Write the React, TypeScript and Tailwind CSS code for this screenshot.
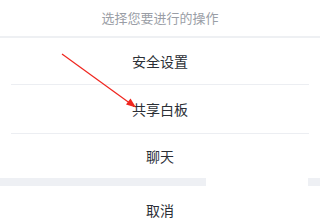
import React from 'react';

const items = ['安全设置', '共享白板', '聊天'];

export default function App() {
    return (
        <div
            className="relative w-[320px] h-[223px] overflow-hidden bg-white"
            style={{ fontFamily: '"Noto Sans CJK SC", "Noto Sans", sans-serif' }}
        >
            {/* Title */}
            <div className="h-[36px] flex items-center justify-center text-[13px] text-[#9a9ea6]">
                选择您要进行的操作
            </div>
            <div className="h-[2px] bg-[#eef0f3]" />

            {/* Actions */}
            <div className="flex flex-col">
                {items.map((label, i) => (
                    <div key={label} className="flex flex-col">
                        <div
                            className={`flex items-center justify-center text-[14px] text-[#2b2f36] ${
                                i === 0 ? 'h-[46px]' : i === 1 ? 'h-[48px]' : 'h-[44px]'
                            }`}
                        >
                            {label}
                        </div>
                        {i < items.length - 1 && <div className="mx-[11px] h-px bg-[#eceef2]" />}
                    </div>
                ))}
            </div>

            {/* Band between actions and cancel */}
            <div className="flex h-[8px]">
                <div className="w-[206px] bg-[#eef0f4]" />
                <div className="flex-1 bg-white" />
                <div className="w-[12px] bg-[#eef0f4]" />
            </div>

            <div className="h-[48px] flex items-center justify-center text-[14px] text-[#2b2f36]">
                取消
            </div>

            {/* Annotation arrow */}
            <svg className="absolute left-0 top-0 pointer-events-none" width="320" height="223">
                <line x1="62" y1="54" x2="131" y2="104" stroke="#f0261f" strokeWidth="1.2" />
                <polygon points="136,107.5 126,104.5 130.5,98.5" fill="#f0261f" />
            </svg>
        </div>
    );
}
